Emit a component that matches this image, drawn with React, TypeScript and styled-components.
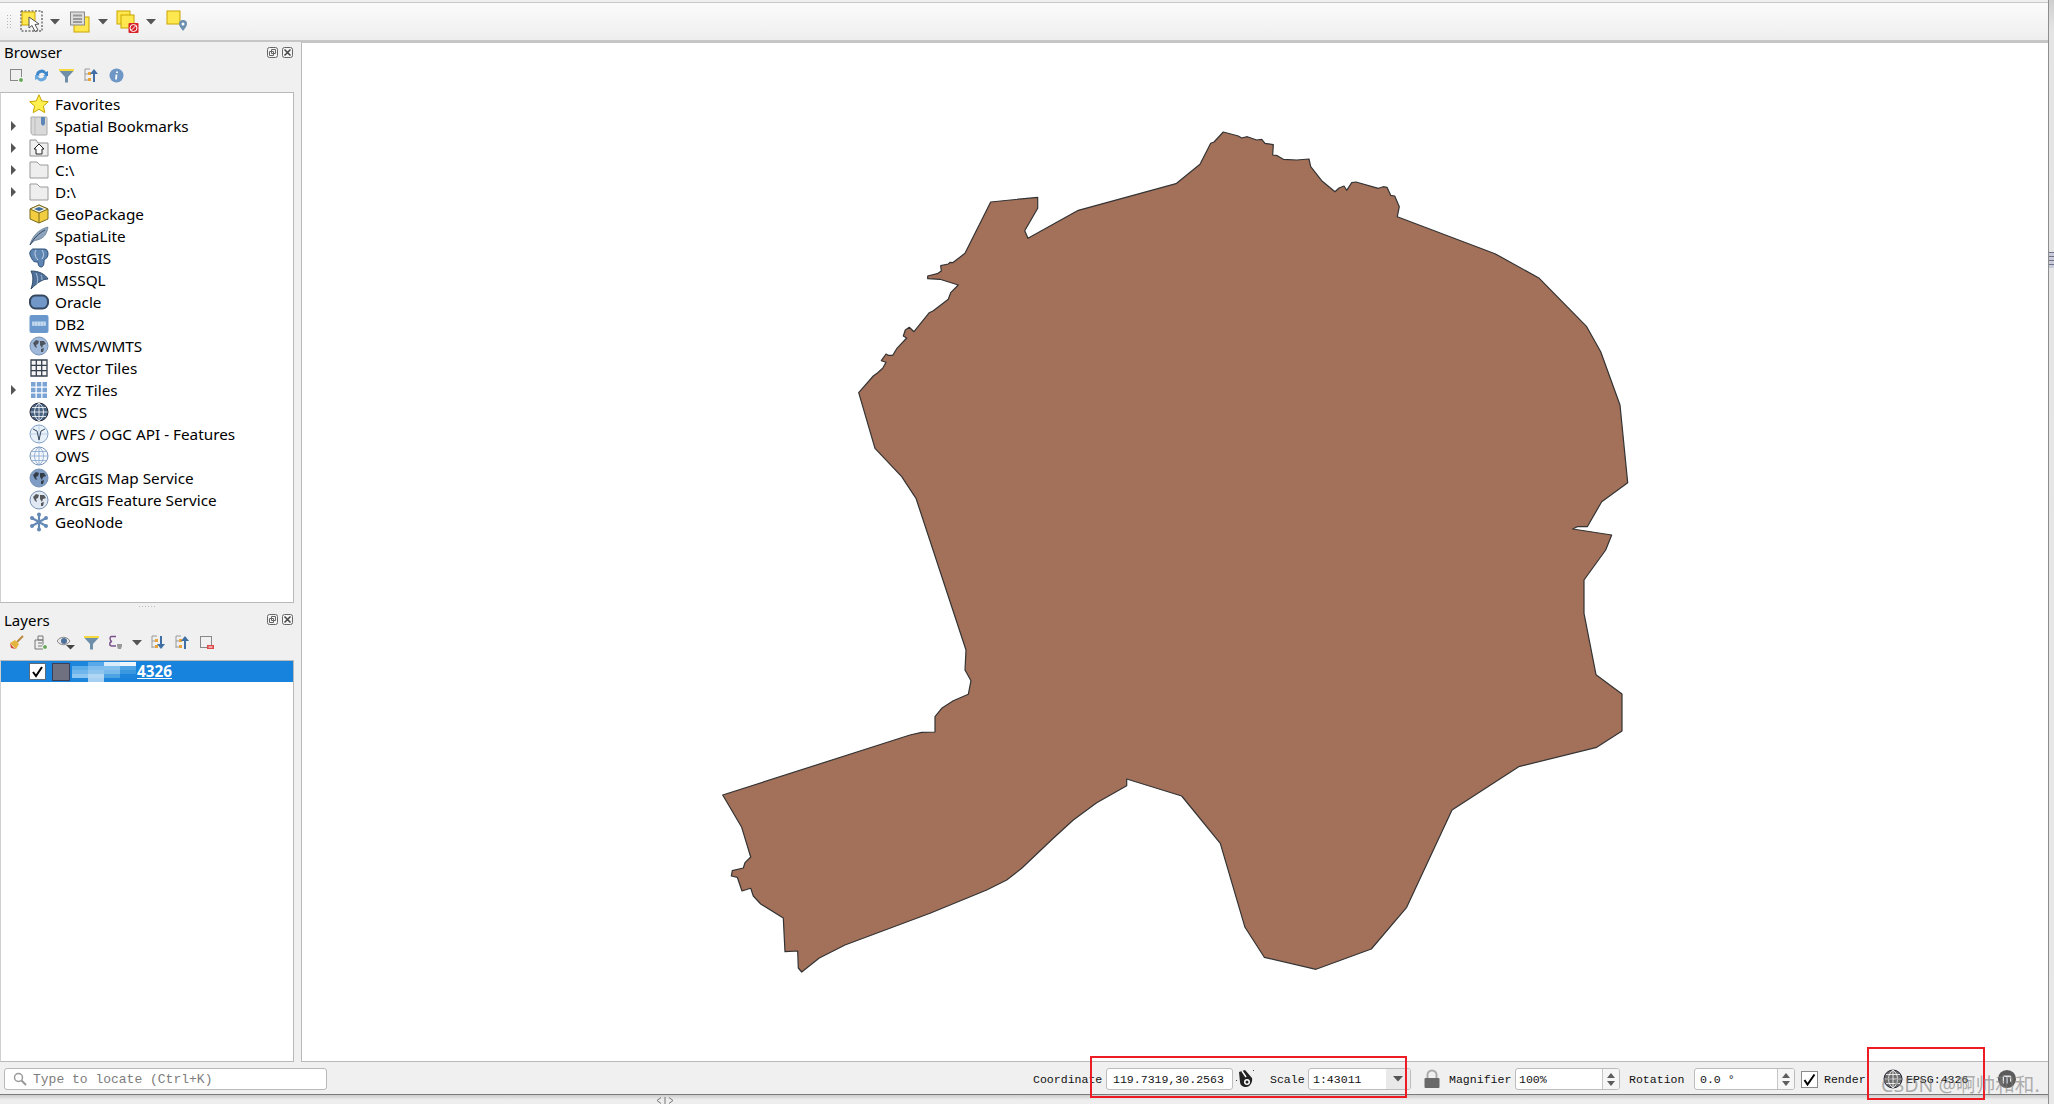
import React from "react";
import styled, { createGlobalStyle } from "styled-components";

const Global = createGlobalStyle`
  html, body { margin: 0; padding: 0; background: #f0f0f0; }
  #root { width: 2054px; height: 1104px; overflow: hidden; }
`;

const UI = `"Noto Sans", "Noto Sans CJK SC", sans-serif`;
const MONO = `"Liberation Mono", "Noto Sans CJK SC", monospace`;

const Page = styled.div`
  position: relative; width: 2054px; height: 1104px; display: flex; overflow: hidden;
  background: #e9e9e9; font-family: ${UI}; color: #000;
`;
const Win = styled.div`
  width: 2048px; display: flex; flex-direction: column; flex: none; background: #f0f0f0;
  border-right: 1px solid #8d8d8d; box-sizing: content-box;
`;
const EdgeStrip = styled.div`
  flex: 1; display: flex; flex-direction: column; align-items: stretch; padding-top: 252px;
  background: linear-gradient(#cfcfcf 0, #e4e4e4 30px, #e8e8e8 100%);
`;
const EdgeGrip = styled.div`
  height: 16px; background: repeating-linear-gradient(#6f7186 0 1px, #c9cbd8 1px 4px);
`;
const TopBar = styled.div`
  height: 37px; flex: none; display: flex; align-items: center; padding-left: 6px; margin-top: 2px;
  border-top: 1px solid #c8c8c8; border-bottom: 2px solid #c6c6c6;
  background: linear-gradient(#fbfbfb, #eeeeee);
`;
const Grip = styled.div`
  width: 5px; height: 16px; margin-right: 9px;
  background-image: radial-gradient(#b5b5b5 0.7px, transparent 0.8px);
  background-size: 3px 3px;
`;
const ToolSlot = styled.span<{ $w: number; $ml?: number }>`
  display: inline-flex; flex: none; width: ${(p) => p.$w}px; margin-left: ${(p) => p.$ml ?? 0}px;
  align-items: center; justify-content: center;
`;
const Main = styled.div`
  flex: 1; min-height: 0; display: flex;
`;
const Side = styled.div`
  width: 294px; flex: none; display: flex; flex-direction: column; margin-right: 7px;
`;
const DockTitle = styled.div<{ $h: number }>`
  height: ${(p) => p.$h}px; flex: none; display: flex; align-items: center; padding: 0 1px 0 4px;
  font-size: 15px; box-sizing: border-box;
`;
const DockName = styled.span`flex: 1;`;
const DockBtn = styled.span`
  width: 11px; height: 11px; margin-left: 4px; display: inline-flex;
`;
const MiniBar = styled.div<{ $h: number; $pb: number; $gap: number }>`
  height: ${(p) => p.$h}px; padding-bottom: ${(p) => p.$pb}px; box-sizing: border-box;
  flex: none; display: flex; align-items: center; padding-left: 9px; gap: ${(p) => p.$gap}px;
`;
const TreeBox = styled.div<{ $h?: number }>`
  ${(p) => (p.$h ? `height: ${p.$h}px; flex: none;` : "flex: 1;")}
  box-sizing: border-box; background: #fff; border: 1px solid #b9b9b9; border-left-color: #d0d0d0; padding-top: 0;
`;
const Row = styled.div`
  height: 22px; display: flex; align-items: center; font-size: 15.3px; white-space: nowrap;
`;
const Caret = styled.span<{ $on: boolean }>`
  width: 0; height: 0; margin-left: 10px; flex: none;
  border-left: 5px solid ${(p) => (p.$on ? "#555" : "transparent")};
  border-top: 5px solid transparent; border-bottom: 5px solid transparent;
`;
const RowIcon = styled.span`
  width: 20px; height: 20px; margin: 0 6px 0 13px; flex: none; display: inline-flex;
`;
const Splitter = styled.div`
  height: 6px; flex: none; display: flex; justify-content: center; align-items: center;
  &::after { content: ""; width: 16px; height: 1px; background: repeating-linear-gradient(90deg, #bbb 0 1px, transparent 1px 3px); }
`;
const SelRow = styled.div`
  height: 21px; display: flex; align-items: center; background: #1783dc; color: #fff; font-size: 15.3px; font-weight: 700;
`;
const CheckBox = styled.span`
  width: 17px; height: 17px; margin-left: 28px; background: #fff; border: 1px solid #5b6b7c; box-sizing: border-box;
  display: inline-flex; align-items: center; justify-content: center; flex: none;
`;
const Swatch = styled.span`
  width: 18px; height: 18px; margin-left: 6px; background: #6f7080; border: 1px solid #3b3f55; box-sizing: border-box; flex: none;
`;
const Mosaic = styled.span`
  display: grid; grid-template-columns: repeat(4, 16px); grid-auto-rows: 4px; width: 64px; margin-left: 2px; flex: none;
`;
const Tile = styled.span<{ $c: string }>`background: ${(p) => p.$c};`;
const LayerName = styled.span`text-decoration: underline; margin: -2px 0 0 1px;`;

const Canvas = styled.div`
  flex: 1; min-width: 0; background: #fff; border: 1px solid #b9b9b9; border-right: none; border-top-color: #c4c4c4; box-sizing: border-box; overflow: hidden;
`;
const MapSvg = styled.svg`
  display: block; width: 1746px; height: 1019px;
`;

const StatusBar = styled.div`
  height: 33px; flex: none; display: flex; align-items: center; padding: 2px 31px 0 4px; box-sizing: border-box;
  border-bottom: 1px solid #7b7b7b; font-family: ${MONO}; font-size: 11.55px; background: #f0f0f0;
`;
const Locator = styled.div`
  width: 323px; height: 22px; box-sizing: border-box; border: 1px solid #b9b9b9; border-radius: 3px; background: #fff;
  display: flex; align-items: center; padding-left: 8px; gap: 6px; color: #7d7d7d; font-size: 13px;
`;
const RightGroup = styled.div`
  margin-left: auto; display: flex; align-items: center;
`;
const Label = styled.span<{ $w: number; $ml: number }>`
  width: ${(p) => p.$w}px; margin-left: ${(p) => p.$ml}px; flex: none; white-space: nowrap; color: #111;
`;
const Field = styled.div<{ $w: number; $ml: number }>`
  width: ${(p) => p.$w}px; margin-left: ${(p) => p.$ml}px; height: 22px; flex: none; box-sizing: border-box; background: #fff;
  border: 1px solid #bcbcbc; border-radius: 3px; display: flex; align-items: center; color: #111; overflow: hidden;
`;
const FieldText = styled.span<{ $pl: number }>`flex: 1; padding-left: ${(p) => p.$pl}px; white-space: nowrap;`;
const Spin = styled.span`
  width: 16px; height: 100%; border-left: 1px solid #c6c6c6; display: flex; flex-direction: column; align-items: center; justify-content: center; gap: 3px; background: #f6f6f6;
`;
const SpinUp = styled.i`width: 0; height: 0; border: 4px solid transparent; border-top: 0; border-bottom: 5px solid #5d5d5d;`;
const SpinDown = styled.i`width: 0; height: 0; border: 4px solid transparent; border-bottom: 0; border-top: 5px solid #5d5d5d;`;
const Drop = styled.span`
  width: 24px; height: 100%; background: #e9e9e9; display: flex; align-items: center; justify-content: center;
`;
const IconSlot = styled.span<{ $w: number; $ml: number }>`
  width: ${(p) => p.$w}px; margin-left: ${(p) => p.$ml}px; flex: none; display: inline-flex; align-items: center; justify-content: center;
`;
const RenderBox = styled.span`
  width: 17px; height: 17px; margin-left: 6px; flex: none; box-sizing: border-box; background: #fff; border: 1px solid #8c8c8c; display: inline-flex; align-items: center; justify-content: center;
`;
const ShadowBand = styled.div`
  height: 9px; flex: none; position: relative; background: linear-gradient(#cdcdcd, #eeeeee 5px);
`;
const HandleMark = styled.svg`
  position: absolute; left: 656px; top: 2px;
`;
const RedFrame = styled.div<{ $l: number; $t: number; $w: number; $h: number }>`
  position: absolute; left: ${(p) => p.$l}px; top: ${(p) => p.$t}px; width: ${(p) => p.$w}px; height: ${(p) => p.$h}px;
  border: 2px solid #ed1c24; box-sizing: border-box; pointer-events: none;
`;
const Watermark = styled.div`
  position: absolute; left: 1881px; top: 1072px; font-family: "Noto Sans", "Noto Sans CJK SC", sans-serif; font-size: 19.6px; line-height: 26px;
  color: rgba(125, 125, 125, 0.6); white-space: nowrap; pointer-events: none;
`;

const Y = "#ffe84f", YB = "#c9a400";

const Sel = () => (
  <svg width="24" height="24" viewBox="0 0 24 24">
    <rect x="1" y="1" width="21" height="20" fill="none" stroke="#333" strokeDasharray="2 1.5" />
    <rect x="2" y="2" width="13" height="13" fill={Y} stroke={YB} />
    <path d="M9 7l0 11 3-2.500 3 6 3-1.500-3-5.500 4-.5z" fill="#fff" stroke="#555" />
  </svg>
);
const FormSel = () => (
  <svg width="20" height="22" viewBox="0 0 20 22">
    <rect x="4" y="6" width="15" height="15" fill={Y} stroke={YB} />
    <rect x="0.500" y="1" width="14" height="13" fill="#ddd" stroke="#888" />
    <path d="M3 4.500h9M3 8h9M3 11h9" stroke="#999" strokeWidth="2" />
  </svg>
);
const Desel = () => (
  <svg width="24" height="24" viewBox="0 0 24 24">
    <rect x="1" y="1" width="13" height="13" fill={Y} stroke={YB} />
    <rect x="5" y="5" width="13" height="13" fill={Y} stroke={YB} />
    <rect x="12.500" y="13" width="10" height="10" rx="1" fill="#d8232a" />
    <circle cx="17.500" cy="18" r="3.500" fill="none" stroke="#fff" />
    <path d="M15 20.500l5-5" stroke="#fff" />
  </svg>
);
const SelPin = () => (
  <svg width="22" height="24" viewBox="0 0 22 24">
    <rect x="1" y="1" width="13" height="13" fill={Y} stroke={YB} />
    <path d="M17 21c-2-3-4-5-4-7a4 4 0 0 1 8 0c0 2-2 4-4 7z" fill="#6b8fae" />
    <circle cx="17" cy="14" r="1.500" fill="#fff" />
  </svg>
);
const Arrow = () => (
  <svg width="10" height="6" viewBox="0 0 10 6"><path d="M0 0h10L5 5.500z" fill="#555" /></svg>
);

const Globe = ({ base = "#7f9fc9", land = "#333", wire = false, dark = false }: { base?: string; land?: string; wire?: boolean; dark?: boolean }) => (
  <svg width="20" height="20" viewBox="0 0 20 20">
    <circle cx="10" cy="10" r="9" fill={base} stroke={dark ? "#223" : "#7790b3"} />
    {wire && <path d="M1.500 10h17M3 5.500h14M3 14.500h14M10 1v18M10 1c-6 4-6 14 0 18M10 1c6 4 6 14 0 18" fill="none" stroke={dark ? "#fff" : "#88a6cf"} strokeWidth="0.8" />}
    {!wire && (
      <path d="M4 7l3-3 3 1-1 3-2 1 1 3-2-1zM11 5l4 0 2 3-3 1-1 3-2-3zM12 13l3-1-1 4-2 0z" fill={land} opacity="0.75" />
    )}
  </svg>
);

const icons: Record<string, React.ReactNode> = {
  star: (
    <svg width="20" height="20" viewBox="0 0 20 20"><path d="M10 .8l2.800 6.200 6.500.7-4.900 4.400 1.400 6.500L10 15.300 4.200 18.600l1.400-6.500L.7 7.700l6.500-.7z" fill="#fff04f" stroke="#c9a400" /></svg>
  ),
  book: (
    <svg width="20" height="20" viewBox="0 0 20 20">
      <path d="M2 1h15a1 1 0 0 1 1 1v16a1 1 0 0 1-1 1H5c-2 0-3-1-3-3z" fill="#d9d9d9" stroke="#aaa" />
      <path d="M6 1v18" stroke="#bbb" /><path d="M12 1h4v7l-2 2-2-2z" fill="#5c86b5" />
    </svg>
  ),
  home: (
    <svg width="20" height="20" viewBox="0 0 20 20">
      <path d="M1 18V2h6l2 3h10v13z" fill="#eee" stroke="#8f8f8f" />
      <path d="M5 11l5-5 5 5h-2v5H7v-5z" fill="#fff" stroke="#222" />
    </svg>
  ),
  folder: (
    <svg width="20" height="20" viewBox="0 0 20 20"><path d="M1 18V2h7l3 3h8v13z" fill="#eee" stroke="#9b9b9b" /></svg>
  ),
  gpkg: (
    <svg width="20" height="20" viewBox="0 0 20 20">
      <path d="M10 1l9 4v10l-9 4-9-4V5z" fill="#f2cd3f" stroke="#7a6a20" />
      <path d="M10 1l9 4-9 4-9-4z" fill="#f7f3d8" stroke="#7a6a20" />
      <path d="M10 3l5 2-5 2-5-2z" fill="#3f6ea3" /><path d="M10 9v10" stroke="#7a6a20" />
    </svg>
  ),
  feather: (
    <svg width="20" height="20" viewBox="0 0 20 20">
      <path d="M1 19C3 10 10 3 19 1c-1 6-3 9-6 11-3 2-6 2-8 3z" fill="#8da3bb" stroke="#5f7790" strokeWidth="0.7" />
      <path d="M1 19C5 12 10 7 16 4" stroke="#34495e" fill="none" />
    </svg>
  ),
  pg: (
    <svg width="20" height="20" viewBox="0 0 20 20">
      <path d="M4 1h11c3 0 4 2 4 5s-2 5-4 6v2c0 3-1 5-3 5s-3-2-3-5H8c-3 0-4-1-5-3S0 6 1 4s2-3 3-3z" fill="#5f86b3" stroke="#2d4f78" />
      <path d="M7 2c-2 3-1 7 2 10M13 2c2 3 2 6 0 9" stroke="#cdd9e8" fill="none" />
    </svg>
  ),
  mssql: (
    <svg width="20" height="20" viewBox="0 0 20 20"><path d="M2 1c8 0 14 3 17 8-5 0-10 3-17 10 2-6 3-12 0-18z" fill="#4f7199" stroke="#2e4968" /><path d="M7 3c2 4 2 8 1 11M12 5c1 2 1 4 1 5" stroke="#a9c0da" fill="none" /></svg>
  ),
  oracle: (
    <svg width="20" height="20" viewBox="0 0 20 20"><rect x="1" y="3.500" width="18" height="13" rx="5.500" fill="#7097c8" stroke="#34475f" strokeWidth="2" /></svg>
  ),
  db2: (
    <svg width="20" height="20" viewBox="0 0 20 20"><rect x="0.500" y="1" width="19" height="18" rx="2" fill="#6a97cc" /><rect x="3.300" y="7.300" width="13.400" height="4.700" fill="#a9c6e6" /><path d="M4 8v3.500M7 8v3.500M10 8v3.500M13 8v3.500M16 8v3.500" stroke="#e8f0fa" strokeWidth="0.900" /></svg>
  ),
  wms: <Globe base="#9fb9da" />,
  vector: (
    <svg width="20" height="20" viewBox="0 0 20 20"><path d="M2 2h16v16H2zM2 7.300h16M2 12.700h16M7.300 2v16M12.700 2v16" fill="#f5f5f5" stroke="#35414f" strokeWidth="1.300" /></svg>
  ),
  xyz: (
    <svg width="20" height="20" viewBox="0 0 20 20"><path d="M2 2h4.500v4.500H2zM7.800 2h4.500v4.500H7.800zM13.500 2H18v4.500h-4.500zM2 7.800h4.500v4.500H2zM7.800 7.800h4.500v4.500H7.800zM13.500 7.800H18v4.500h-4.500zM2 13.500h4.500V18H2zM7.800 13.500h4.500V18H7.800zM13.500 13.500H18V18h-4.500z" fill="#7ba3d3" /></svg>
  ),
  wcs: <Globe base="#46617f" wire dark />,
  wfs: (
    <svg width="20" height="20" viewBox="0 0 20 20">
      <circle cx="10" cy="10" r="9" fill="#e8f0f8" stroke="#7f9fc9" />
      <path d="M1.500 10h17M10 1v18" stroke="#a9c2de" strokeWidth="0.700" />
      <path d="M4 5l4 2 2 9 2-9 4-2" fill="none" stroke="#38495e" />
    </svg>
  ),
  ows: <Globe base="#f3f7fc" wire />,
  arc: <Globe base="#7e9cc4" land="#1c1c1c" />,
  arcf: <Globe base="#dfe8f3" land="#2a2a2a" />,
  geonode: (
    <svg width="20" height="20" viewBox="0 0 20 20"><path d="M10 10V2M10 10v8M10 10L3 6M10 10l7-4M10 10l-7 4M10 10l7 4" stroke="#6489b5" strokeWidth="2.200" /><g fill="#6489b5"><circle cx="10" cy="2.500" r="2" /><circle cx="10" cy="17.500" r="2" /><circle cx="3" cy="6" r="2" /><circle cx="17" cy="6" r="2" /><circle cx="3" cy="14" r="2" /><circle cx="17" cy="14" r="2" /></g></svg>
  ),
};

type Item = { label: string; icon: string; caret?: boolean };
const items: Item[] = [
  { label: "Favorites", icon: "star" },
  { label: "Spatial Bookmarks", icon: "book", caret: true },
  { label: "Home", icon: "home", caret: true },
  { label: "C:\\", icon: "folder", caret: true },
  { label: "D:\\", icon: "folder", caret: true },
  { label: "GeoPackage", icon: "gpkg" },
  { label: "SpatiaLite", icon: "feather" },
  { label: "PostGIS", icon: "pg" },
  { label: "MSSQL", icon: "mssql" },
  { label: "Oracle", icon: "oracle" },
  { label: "DB2", icon: "db2" },
  { label: "WMS/WMTS", icon: "wms" },
  { label: "Vector Tiles", icon: "vector" },
  { label: "XYZ Tiles", icon: "xyz", caret: true },
  { label: "WCS", icon: "wcs" },
  { label: "WFS / OGC API - Features", icon: "wfs" },
  { label: "OWS", icon: "ows" },
  { label: "ArcGIS Map Service", icon: "arc" },
  { label: "ArcGIS Feature Service", icon: "arcf" },
  { label: "GeoNode", icon: "geonode" },
];

const S = (p: { children: React.ReactNode }) => (
  <svg width="15" height="15" viewBox="0 0 15 15">{p.children}</svg>
);
const Tree = () => <rect x="1.500" y="1.500" width="11" height="11" fill="none" stroke="#888" />;
const collapse = (
  <S><path d="M1 1h5M1 1v12M1 6h5M1 12h5" stroke="#999" fill="none" /><rect x="4" y="4" width="3" height="3" fill="#e8a33b" /><rect x="4" y="10" width="3" height="3" fill="#e8a33b" /><path d="M11 14V6h3l-4-5-4 5h3v8z" fill="#3f6fa5" /></S>
);
const expand = (
  <S><path d="M1 1h5M1 1v12M1 6h5M1 12h5" stroke="#999" fill="none" /><rect x="4" y="4" width="3" height="3" fill="#e8a33b" /><rect x="4" y="10" width="3" height="3" fill="#e8a33b" /><path d="M11 1v8h3l-4 5-4-5h3V1z" fill="#3f6fa5" /></S>
);
const filter = (
  <S><path d="M0 1h15v2H0z" fill="#f5d93d" /><path d="M0.500 3h14L9 9v5.500H6V9z" fill="#6f8ea8" /></S>
);
const IconCell = styled.span`display: inline-flex;`;
const browserTools = [
  <S key="a"><Tree /><circle cx="12" cy="12" r="2.500" fill="#6ba55a" stroke="#fff" /></S>,
  <S key="b"><path d="M2 7a5.500 5.500 0 0 1 10-3l2-1v5H9l2-1.500A3.500 3.500 0 0 0 4.500 8z" fill="#3f87c9" /><path d="M13 8a5.500 5.500 0 0 1-10 3l-2 1V7h5L4 8.500A3.500 3.500 0 0 0 10.500 7z" fill="#69a8dc" /></S>,
  <IconCell key="c">{filter}</IconCell>,
  <IconCell key="d">{collapse}</IconCell>,
  <S key="e"><circle cx="7.500" cy="7.500" r="7" fill="#6f97c6" /><path d="M8 3.500v1.500M7.500 6.500L7 11.500" stroke="#fff" strokeWidth="1.800" /></S>,
];
const layerTools = [
  <S key="a"><path d="M14 1L8 7" stroke="#b8893d" strokeWidth="2" /><path d="M1 8l5-3 4 4-3 5z" fill="#e4b53e" /><path d="M1 8l3 4 3 2-5-1z" fill="#d3452f" /></S>,
  <S key="b"><path d="M2 5h8v9H2zM5 1h5v4H5z" fill="#eee" stroke="#777" /><path d="M5 8h4M5 11h4" stroke="#777" /><circle cx="12" cy="12" r="2.500" fill="#6ba55a" stroke="#fff" /></S>,
  <svg key="c" width="18" height="15" viewBox="0 0 18 15"><path d="M0 6c3-5 10-5 13 0-3 5-10 5-13 0z" fill="#e6e6e6" stroke="#888" /><circle cx="7" cy="6" r="3" fill="#4f7199" /><path d="M9 10h9l-4.500 4.500z" fill="#444" /></svg>,
  <IconCell key="d">{filter}</IconCell>,
  <svg key="e" width="15" height="15" viewBox="0 0 15 15"><path d="M8 1.500H3.500C1.500 1.500 1.500 6 4 6.500 1 7 1 11 4 11h4" fill="none" stroke="#7a4f8c" strokeWidth="1.400" /><path d="M9 9h5v2l-1 3H10L9 11z" fill="#999" /></svg>,
  <Arrow key="f" />,
  <IconCell key="g">{expand}</IconCell>,
  <IconCell key="h">{collapse}</IconCell>,
  <S key="i"><Tree /><rect x="8" y="10" width="7" height="4" fill="#e04a4a" /><path d="M9.500 12h4" stroke="#fff" /></S>,
];

const FloatGlyph = () => (
  <svg width="11" height="11" viewBox="0 0 11 11"><rect x="0.500" y="0.500" width="10" height="10" rx="2" fill="#f4f4f4" stroke="#666" /><path d="M4.500 2.500h4v4h-4zM2.500 4.500h4v4h-4z" fill="none" stroke="#666" /></svg>
);
const CloseGlyph = () => (
  <svg width="11" height="11" viewBox="0 0 11 11"><rect x="0.500" y="0.500" width="10" height="10" rx="2" fill="#f4f4f4" stroke="#666" /><path d="M2.500 2.500l6 6M8.500 2.500l-6 6" stroke="#444" strokeWidth="1.500" /></svg>
);

const tiles = [
  "#1d86dc","#59a9ea","#d9ecfb","#eef6fd",
  "#5bace8","#7fbdee","#82c0ee","#4ea3e4",
  "#6fb6ec","#8dc5ef","#78b9ec","#3a98e0",
  "#8cc5f0","#b0d6f4","#4ea3e4","#1d86dc",
  "#1d86dc","#a5d0f2","#1d86dc","#1783dc",
];

const pts = `858.7,392.7 873.3,376 877.7,372.7 882.7,368.3 886,362.3 881.3,360.7 886,354 888.3,355.3 892.7,355.3 896.7,348.7 906.7,338 903.3,336 905.3,330 909.3,327.3 914,331.7 929.3,312.7 933.3,310.7 948.3,299.3 950.7,292.7 958.3,285 940,279.3 927.7,278.7 927.7,276 937.3,273.7 941.3,271 940.7,265.7 948.3,264 950,262.3 952.7,262.7 965,253.3 990.7,202 1037.7,197.3 1037.7,208.3 1024.7,230.7 1028,238.3 1078.3,210.3 1176,183.7 1200,164.3 1210.7,143.3 1214,142 1223.3,132 1238.3,136 1241.7,138 1247.3,136.7 1256.7,140 1261.7,139.3 1265,143.3 1273.3,144.7 1272.7,155 1277.3,155.7 1283.3,159.3 1296.7,160 1309,159 1310.7,166.7 1321.7,180.7 1335,191.7 1339,188 1344,186 1346.7,190.3 1351.7,182.7 1356,182 1378.3,188.3 1383.3,186.7 1387,187.3 1390.7,195.3 1394.7,196 1399.3,206.7 1397.3,216.7 1495,253.7 1539.3,278.3 1586.7,326.7 1600.7,351.7 1620,405 1627.7,482.7 1601.7,501.7 1587.3,526.7 1577.3,526.7 1572.7,529 1611.7,535 1605.7,550 1584,580 1584,613.3 1596,674.7 1622,694 1622,731 1596.7,747.3 1518.7,766.7 1452,810 1406.7,907.3 1371.3,949 1316,969.3 1264.3,957.3 1245,927.3 1220.3,843.3 1181.7,796 1126.7,779 1126.7,785.7 1096.7,802.7 1073.3,820 1053.3,838.3 1021.7,868.3 1006.7,880 986.7,890 930,913.3 845,945 819.3,958 801.7,972 798.3,968 797.7,951 785,951.7 783.3,918 760.7,904 753.3,896 750.7,888.3 742,891 737.3,877.3 731.3,876 732.3,870.7 743.3,868 745,862.7 750.7,857 741.7,827.3 722.7,795 910,735 921.7,732.3 935,732 935,716.7 941.7,708.3 953.3,700.7 968.3,694.3 971,680.7 965,670 966,650 916,498.3 901.7,476.7 875,448.3`;

export default function App() {
  return (
    <Page>
      <Global />
      <Win>
        <TopBar>
          <Grip />
          <ToolSlot $w={24}><Sel /></ToolSlot>
          <ToolSlot $w={10} $ml={6}><Arrow /></ToolSlot>
          <ToolSlot $w={20} $ml={10}><FormSel /></ToolSlot>
          <ToolSlot $w={10} $ml={8}><Arrow /></ToolSlot>
          <ToolSlot $w={24} $ml={8}><Desel /></ToolSlot>
          <ToolSlot $w={10} $ml={6}><Arrow /></ToolSlot>
          <ToolSlot $w={22} $ml={10}><SelPin /></ToolSlot>
        </TopBar>
        <Main>
          <Side>
            <DockTitle $h={20}>
              <DockName>Browser</DockName>
              <DockBtn><FloatGlyph /></DockBtn><DockBtn><CloseGlyph /></DockBtn>
            </DockTitle>
            <MiniBar $h={30} $pb={3} $gap={10}>{browserTools}</MiniBar>
            <TreeBox $h={511}>
              {items.map((it) => (
                <Row key={it.label}>
                  <Caret $on={!!it.caret} />
                  <RowIcon>{icons[it.icon]}</RowIcon>
                  {it.label}
                </Row>
              ))}
            </TreeBox>
            <Splitter />
            <DockTitle $h={21}>
              <DockName>Layers</DockName>
              <DockBtn><FloatGlyph /></DockBtn><DockBtn><CloseGlyph /></DockBtn>
            </DockTitle>
            <MiniBar $h={30} $pb={5} $gap={9}>{layerTools}</MiniBar>
            <TreeBox>
              <SelRow>
                <CheckBox>
                  <svg width="13" height="13" viewBox="0 0 13 13"><path d="M2 7l3 4 6-9" fill="none" stroke="#000" strokeWidth="2" /></svg>
                </CheckBox>
                <Swatch />
                <Mosaic>{tiles.map((c, i) => <Tile key={i} $c={c} />)}</Mosaic>
                <LayerName>4326</LayerName>
              </SelRow>
            </TreeBox>
          </Side>
          <Canvas>
            <MapSvg viewBox="302 43 1746 1019">
              <polygon points={pts} fill="#a3705a" stroke="#333" strokeWidth="1.200" strokeLinejoin="round" />
            </MapSvg>
          </Canvas>
        </Main>
        <StatusBar>
          <Locator>
            <svg width="14" height="14" viewBox="0 0 14 14"><circle cx="5.500" cy="5.500" r="4" fill="none" stroke="#999" strokeWidth="1.500" /><path d="M8.500 8.500L13 13" stroke="#999" strokeWidth="2" /></svg>
            Type to locate (Ctrl+K)
          </Locator>
          <RightGroup>
            <Label $w={69} $ml={0}>Coordinate</Label>
            <Field $w={127} $ml={4}><FieldText $pl={6}>119.7319,30.2563</FieldText></Field>
            <IconSlot $w={20} $ml={3}>
              <svg width="22" height="22" viewBox="0 0 20 20"><path d="M3 3l6-2 7 8c1 4-2 9-6 9-3 0-6-2-6-5z" fill="#222" /><path d="M6 2l4 6" stroke="#fff" strokeWidth="1.500" /><circle cx="11" cy="13" r="3" fill="#fff" /><circle cx="11" cy="13" r="1.500" fill="#222" /><path d="M1 11l-1 1M17 2l1-1" stroke="#444" /></svg>
            </IconSlot>
            <Label $w={34} $ml={14}>Scale</Label>
            <Field $w={103} $ml={4}><FieldText $pl={4}>1:43011</FieldText><Drop><Arrow /></Drop></Field>
            <IconSlot $w={16} $ml={13}>
              <svg width="16" height="20" viewBox="0 0 16 20"><path d="M3.500 9V6a4.500 4.500 0 0 1 9 0v3" fill="none" stroke="#aaa" strokeWidth="2" /><rect x="0.500" y="9" width="15" height="10" rx="1" fill="#6a6a6a" /></svg>
            </IconSlot>
            <Label $w={62} $ml={9}>Magnifier</Label>
            <Field $w={105} $ml={4}><FieldText $pl={3}>100%</FieldText><Spin><SpinUp /><SpinDown /></Spin></Field>
            <Label $w={56} $ml={9}>Rotation</Label>
            <Field $w={101} $ml={9}><FieldText $pl={5}>0.0 °</FieldText><Spin><SpinUp /><SpinDown /></Spin></Field>
            <RenderBox>
              <svg width="13" height="13" viewBox="0 0 13 13"><path d="M1.500 7l3 4.500 7-10" fill="none" stroke="#000" strokeWidth="2" /></svg>
            </RenderBox>
            <Label $w={41} $ml={6}>Render</Label>
            <IconSlot $w={20} $ml={18}><Globe base="#6d6d6d" wire dark /></IconSlot>
            <Label $w={62} $ml={3}>EPSG:4326</Label>
            <IconSlot $w={20} $ml={29}>
              <svg width="22" height="22" viewBox="0 0 22 22"><circle cx="11" cy="11" r="10" fill="#5b5b5b" /><path d="M7 8h8M7 8v8M11 8v8M15 8v6" stroke="#e5e5e5" strokeWidth="1.500" fill="none" /></svg>
            </IconSlot>
          </RightGroup>
        </StatusBar>
        <ShadowBand>
          <HandleMark width="18" height="7" viewBox="0 0 18 7"><path d="M5 0.500L1 3.500l4 3M13 0.500l4 3-4 3M9 0v7" fill="none" stroke="#777" /></HandleMark>
        </ShadowBand>
      </Win>
      <EdgeStrip><EdgeGrip /></EdgeStrip>
      <RedFrame $l={1090} $t={1056} $w={317} $h={42} />
      <RedFrame $l={1867} $t={1047} $w={118} $h={53} />
      <Watermark>CSDN @啊帅和和.</Watermark>
    </Page>
  );
}
